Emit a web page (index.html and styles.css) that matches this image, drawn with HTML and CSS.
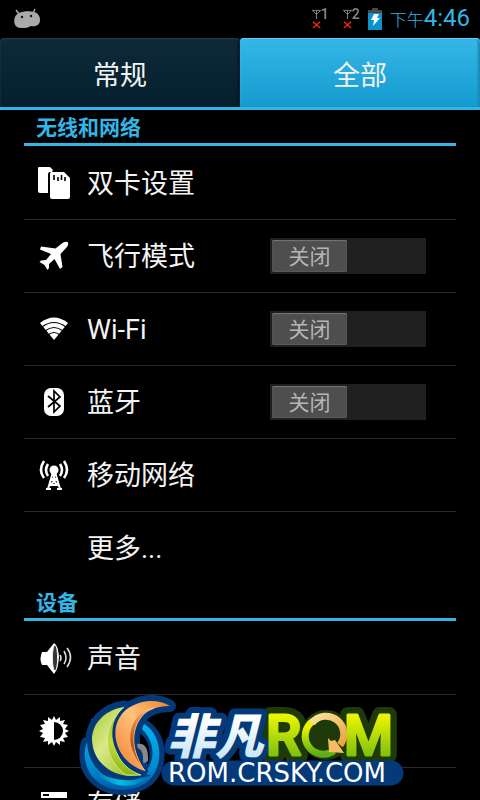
FILE: index.html
```html
<!DOCTYPE html>
<html lang="zh-CN">
<head>
<meta charset="utf-8">
<meta name="viewport" content="width=device-width, initial-scale=1">
<title>设置</title>
<link rel="stylesheet" href="styles.css">
</head>
<body>
<header class="status">
  <svg class="status-robot" width="28" height="22" viewBox="0 0 28 22" aria-hidden="true">
    <path d="M3 2l3 4M22 1l-2 4" stroke="#aaa" stroke-width="1.5"/>
    <path d="M6 5C10 3 17 3 21 4c4 1 6 4 6 8 0 5-4 7-9 6-2 2-11 3-14 1C0 16 0 8 6 5z" fill="#aaa"/>
    <circle cx="9" cy="9" r="1.2" fill="#111"/><circle cx="18" cy="8" r="1.2" fill="#111"/>
  </svg>
  <div class="status-right">
    <div class="sims">
      <div class="sim">
        <svg width="10" height="22" viewBox="0 0 10 22" aria-hidden="true"><path d="M0 1.500h10M1 2l4 4 4-4M5 1v10" fill="none" stroke="#888"/><path d="M1 14l8 7M9 14l-8 7" stroke="#f42b10" stroke-width="1.600"/></svg><span>1</span>
      </div>
      <div class="sim">
        <svg width="10" height="22" viewBox="0 0 10 22" aria-hidden="true"><path d="M0 1.500h10M1 2l4 4 4-4M5 1v10" fill="none" stroke="#888"/><path d="M1 14l8 7M9 14l-8 7" stroke="#f42b10" stroke-width="1.600"/></svg><span>2</span>
      </div>
    </div>
    <svg width="14" height="22" viewBox="0 0 14 22" aria-hidden="true"><path d="M4 0h6v2h4v3H0V2h4z" fill="#4a4a4a"/><path d="M0 5h14v17H0z" fill="#0a94cb"/><path d="M6 6h5l-2 4h3l-7 8 1-6H3z" fill="#fff"/></svg>
    <time class="clock"><span class="ampm">下午</span>4:46</time>
  </div>
</header>

<nav class="tabs" role="tablist">
  <button class="tab" role="tab" aria-selected="false">常规</button>
  <button class="tab tab-active" role="tab" aria-selected="true">全部</button>
</nav>

<main class="settings">
  <section>
    <h2 class="heading">无线和网络</h2>
    <ul class="list">
      <li class="row">
        <svg class="icon" viewBox="0 0 36 36" aria-hidden="true"><path d="M3 2h11l3 3-1 2h-3l-1 2v19H4q-2 0-2-2V3q0-1 1-1z" fill="#fff"/><path d="M15 7h13l6 6v19q0 2-2 2H16q-2 0-2-2V8z" fill="#fff"/><path d="M18 10v5M22 12v4M25.500 10v5M29 12v4" stroke="#000" stroke-width="1.600"/></svg>
        <a class="label" href="#sim">双卡设置</a>
      </li>
      <li class="row">
        <svg class="icon" viewBox="0 0 36 36" aria-hidden="true"><path d="M31.500 4c1.500 1 .5 4-1 5.500l-6 6.500 2 13-2.500 2-5.500-10-5.500 5v4l-1.500 2-3-5-5-3 1.500-1.500 5-.5 5-6-11-4.500 1-3 14.500 2 7-5.500q3-2 5-1z" fill="#fff"/></svg>
        <span class="label" id="flight">飞行模式</span>
        <button class="switch" role="switch" aria-checked="false" aria-labelledby="flight"><span class="thumb">关闭</span></button>
      </li>
      <li class="row">
        <svg class="icon" viewBox="0 0 36 36" aria-hidden="true"><path d="M4 12Q18 1 32 12L18 29z" fill="#fff"/><path d="M6 16q12-9 24 0M9 20q9-7 18 0M12 24q6-5 12 0" fill="none" stroke="#000" stroke-width="1.200"/></svg>
        <span class="label" id="wifi">Wi-Fi</span>
        <button class="switch" role="switch" aria-checked="false" aria-labelledby="wifi"><span class="thumb">关闭</span></button>
      </li>
      <li class="row">
        <svg class="icon" viewBox="0 0 36 36" aria-hidden="true"><rect x="8" y="4" width="20" height="28" rx="7" fill="#fff"/><path d="M12 12l12 10-6 6V7l6 6-12 10" fill="none" stroke="#000" stroke-width="1.700"/></svg>
        <span class="label" id="bt">蓝牙</span>
        <button class="switch" role="switch" aria-checked="false" aria-labelledby="bt"><span class="thumb">关闭</span></button>
      </li>
      <li class="row">
        <svg class="icon" viewBox="0 0 36 36" aria-hidden="true"><circle cx="18" cy="13" r="4.500" fill="#fff"/><path d="M17 15l-5 17M19 15l5 17M15 22h6M13 28h10M15 22l8 7M21 22l-8 7M10 32h5M21 32h5M18 16v6" stroke="#fff" stroke-width="2" fill="none"/><path d="M12 7q-4 6 0 12M8 4q-6 9 0 17M24 7q4 6 0 12M28 4q6 9 0 17" fill="none" stroke="#fff" stroke-width="2.600"/></svg>
        <a class="label" href="#mobile">移动网络</a>
      </li>
      <li class="row">
        <span class="icon"></span>
        <a class="label" href="#more">更多...</a>
      </li>
    </ul>
  </section>
  <section>
    <h2 class="heading">设备</h2>
    <ul class="list">
      <li class="row">
        <svg class="icon" viewBox="0 0 36 36" aria-hidden="true"><path d="M6 12h5l7-9q4 2 5 14-1 13-5 17l-7-9H6q-3-6 0-13z" fill="#fff"/><ellipse cx="19" cy="18" rx="2.600" ry="13" fill="#333" stroke="#eee"/><path d="M24 15q2 3 0 6M28 11q4 7 0 13M31 8q7 9 0 19" fill="none" stroke="#ddd" stroke-width="1.600"/></svg>
        <a class="label" href="#sound">声音</a>
      </li>
      <li class="row">
        <svg class="icon" viewBox="0 0 36 36" aria-hidden="true"><path d="M18 3l2 4 4-3 0 4 5-1-2 4 5 1-3 4 4 2-4 2 3 4-5 1 2 4-5-1 0 4-4-3-2 4-2-4-4 3 0-4-5 1 2-4-5-1 3-4-4-2 4-2-3-4 5-1-2-4 5 1 0-4 4 3z" fill="#fff"/><path d="M18 9a9 9 0 0 1 0 18z" fill="#000"/></svg>
        <a class="label" href="#display">显示</a>
      </li>
      <li class="row">
        <svg class="icon" viewBox="0 0 36 36" aria-hidden="true"><path d="M5 6h26v6H5zM5 14h26v7H5zM5 23h26v6H5z" fill="#fff"/><path d="M7 9h6M7 18h6M7 26h6" stroke="#000" stroke-width="2"/></svg>
        <a class="label" href="#storage">存储</a>
      </li>
    </ul>
  </section>
</main>

<svg class="brand" width="340" height="110" viewBox="70 690 340 110" role="img" aria-label="非凡ROM ROM.CRSKY.COM">
  <defs>
    <linearGradient id="ring" x1="0" y1="0" x2="0" y2="1"><stop offset="0" stop-color="#00b4ee"/><stop offset=".7" stop-color="#0087cc"/><stop offset="1" stop-color="#0059a8"/></linearGradient>
    <linearGradient id="base"><stop offset="0" stop-color="#0071bd"/><stop offset=".5" stop-color="#00bfe2"/><stop offset="1" stop-color="#006bb4"/></linearGradient>
    <linearGradient id="leaf" x1="0" y1="0" x2="1" y2="1"><stop offset="0" stop-color="#a5c92b"/><stop offset=".4" stop-color="#d9e98a"/><stop offset="1" stop-color="#8ab80c"/></linearGradient>
    <linearGradient id="leaf2" x1="0" y1="0" x2="0" y2="1"><stop offset="0" stop-color="#8fbd16"/><stop offset=".5" stop-color="#c5dc43"/><stop offset="1" stop-color="#8ab80c"/></linearGradient>
    <linearGradient id="flame" x1="1" y1="0" x2="0" y2="1"><stop offset="0" stop-color="#f08228"/><stop offset=".45" stop-color="#ffc27c"/><stop offset="1" stop-color="#ef7d2d"/></linearGradient>
    <linearGradient id="flame2" x1="0" y1="0" x2="0" y2="1"><stop offset="0" stop-color="#f9a85c"/><stop offset=".6" stop-color="#b94d0b"/><stop offset="1" stop-color="#ee7524"/></linearGradient>
    <linearGradient id="ice" x1="0" y1="0" x2="0" y2="1"><stop offset=".3" stop-color="#fff"/><stop offset="1" stop-color="#b9def5"/></linearGradient>
    <linearGradient id="lime" x1="0" y1="0" x2="0" y2="1"><stop offset=".2" stop-color="#e9f500"/><stop offset="1" stop-color="#5cae16"/></linearGradient>
    <linearGradient id="gold" x1="0" y1="0" x2="1" y2="1"><stop offset="0" stop-color="#fae3a0"/><stop offset="1" stop-color="#eda33c"/></linearGradient>
  </defs>
  <g fill="none" stroke="#04397a" stroke-linejoin="round" stroke-linecap="round">
    <path d="M144 727C162 740 160 768 147 779C130 792 106 790 93 774C86 765 86 754 88 744" stroke-width="15"/>
    <path d="M124 707C104 710 92 724 92 740C93 764 115 780 141 775C120 768 104 745 124 707z" fill="#04397a" stroke-width="13"/>
    <path d="M170 706C160 700 146 699 134 705C104 718 112 762 145 771C134 755 130 738 138 722C144 711 155 706 170 706z" fill="#04397a" stroke-width="12"/>
  </g>
  <path d="M137 744q12-2 11 17l-5 3q1-15-6-16z" fill="#888"/>
  <path d="M144 724C164 736 164 768 147 782C130 795 103 792 91 775C84 764 83 752 87 742C88 766 104 780 125 782C148 782 164 751 142 729z" fill="url(#ring)"/>
  <path d="M92 768C108 780 128 784 149 776C136 791 108 789 92 768z" fill="url(#base)"/>
  <path d="M124 707C104 710 92 724 92 740C93 764 115 780 141 775C120 768 104 745 124 707z" fill="url(#leaf)" stroke="#04397a" stroke-width="5" paint-order="stroke"/>
  <path d="M124 707C104 724 99 755 126 775L141 775C120 768 103 745 124 707z" fill="url(#leaf2)" stroke="#e4efac" stroke-width=".7"/>
  <path d="M170 706C160 700 146 699 134 705C104 718 112 762 145 771C134 755 130 738 138 722C144 711 155 706 170 706z" fill="url(#flame)" stroke="#04397a" stroke-width="6" stroke-linejoin="round" paint-order="stroke"/>
  <path d="M154 708C129 712 119 744 145 771C134 755 130 738 138 722Q144 711 154 708z" fill="url(#flame2)" stroke="#ffc78b" stroke-width=".7"/>
  <g stroke-linejoin="round">
    <g stroke="#1d3a08" stroke-width="16" fill="#1d3a08">
      <text class="brand-rom" x="266" y="755">R</text>
      <circle cx="326" cy="735" r="17"/>
      <text class="brand-rom" x="344" y="755">M</text>
    </g>
    <text class="brand-name" x="167" y="754" fill="url(#ice)" stroke="#04397a" stroke-width="12" paint-order="stroke">非凡</text>
    <path d="M174 773h217" stroke="#04397a" stroke-width="25" stroke-linecap="round"/>
    <g stroke="url(#lime)" stroke-width="3" fill="url(#lime)">
      <text class="brand-rom" x="266" y="755">R</text>
      <text class="brand-rom" x="344" y="755">M</text>
    </g>
    <path d="M313 721A17 17 0 0 0 334 751" fill="none" stroke="url(#lime)" stroke-width="7"/>
    <path d="M312 723A17 17 0 0 1 340 745" fill="none" stroke="url(#gold)" stroke-width="7"/>
    <path d="M328 738l3 3 4-1 5 7 4 6-15-1z" fill="#f6bd62"/>
  </g>
  <text class="brand-site" x="168" y="782" fill="#fff">ROM.CRSKY.COM</text>
</svg>
</body>
</html>
```
FILE: styles.css
```css
* { box-sizing: border-box; }

body {
  margin: 0;
  height: 100vh;
  position: relative;
  display: flex;
  flex-direction: column;
  overflow: hidden;
  background: #000;
  color: #f3f3f3;
  font-family: Roboto, "Noto Sans CJK SC", sans-serif;
}

button {
  border: 0;
  padding: 0;
  color: inherit;
  font: inherit;
}

.status {
  flex: none;
  height: 38px;
  padding: 0 10px 0 13px;
  display: flex;
  align-items: center;
  justify-content: space-between;
}

.status-right {
  display: flex;
  align-items: center;
  gap: 8px;
}

.sims {
  display: flex;
  gap: 14px;
}

.sim {
  width: 17px;
  height: 22px;
  display: flex;
  color: #888;
  font-size: 14px;
  font-weight: 500;
  line-height: 12px;
}

.clock {
  color: #33b5e5;
  font-size: 24px;
  line-height: 32px;
}

.ampm { font-size: 17px; font-weight: 300; }

.tabs {
  flex: none;
  display: flex;
  height: 72px;
  border-bottom: 3px solid #33b5e5;
}

.tab {
  flex: 1;
  padding-top: 2px;
  border-radius: 4px 4px 0 0;
  background: linear-gradient(#0e2a39, #04202f);
  box-shadow: inset 0 1px 2px #2b4350, inset -2px 0 2px #03131c;
  font-size: 27px;
}

.tab-active {
  background: linear-gradient(#35b6e6, #159bd0);
  box-shadow: inset 0 1px 1px #6bd0f3, inset -2px 0 2px #1683b0;
}

.settings {
  flex: 1;
  min-height: 0;
  overflow: hidden;
  padding: 0 24px;
}

.heading {
  margin: 0;
  height: 36px;
  padding-left: 12px;
  border-bottom: 3px solid #33b5e5;
  color: #33b5e5;
  font-size: 21px;
  font-weight: 700;
  line-height: 37px;
}

.list {
  margin: 0;
  padding: 1px 0 0;
  list-style: none;
}

.row {
  height: 73px;
  padding: 0 30px 0 12px;
  display: flex;
  align-items: center;
  gap: 15px;
  border-bottom: 1px solid #2a2a2a;
}

.row:last-child { border-bottom-color: transparent; }

.icon {
  flex: none;
  width: 36px;
  height: 36px;
}

.label {
  flex: 1;
  padding-top: 2px;
  color: inherit;
  font-size: 27px;
  line-height: 40px;
  text-decoration: none;
}

.switch {
  width: 156px;
  height: 36px;
  padding: 2px;
  background: #202020;
}

.thumb {
  display: block;
  width: 75px;
  height: 32px;
  border-radius: 2px;
  background: #4e4e4e;
  box-shadow: inset 0 1px 1px #777, inset 0 -1px 1px #5c5c5c;
  color: #b5b5b5;
  font-size: 21px;
  line-height: 34px;
  text-align: center;
}

.brand {
  position: absolute;
  bottom: 0;
  left: 0;
  right: 0;
  margin: 0 auto;
}

.brand-name {
  font-family: "Noto Sans CJK SC", sans-serif;
  font-size: 48px;
  font-style: italic;
  font-weight: 900;
}

.brand-rom {
  font-family: Roboto, sans-serif;
  font-size: 56px;
  font-weight: 500;
}

.brand-site {
  font-family: "DejaVu Sans", sans-serif;
  font-size: 26px;
}
```
